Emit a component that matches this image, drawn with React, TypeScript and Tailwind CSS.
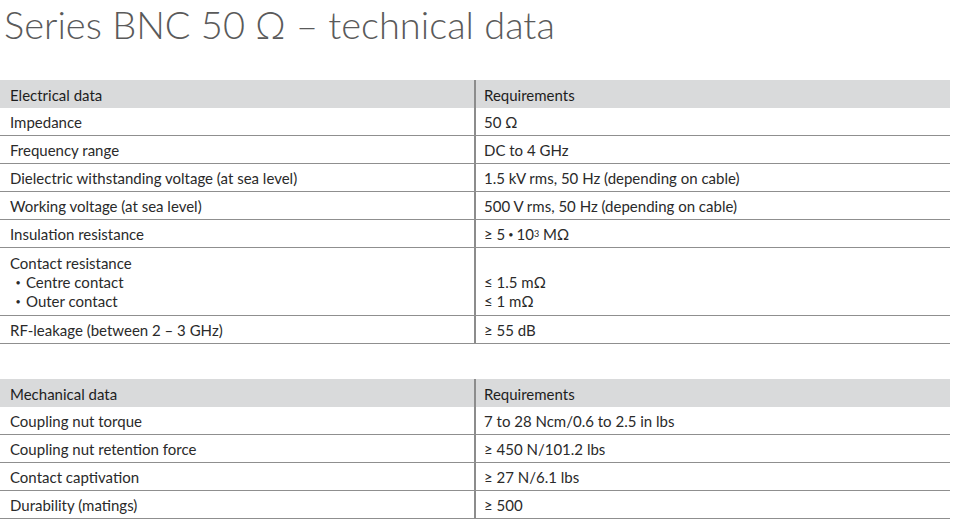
const ELECTRICAL: { label: React.ReactNode; value: React.ReactNode; tall?: boolean }[] = [
  { label: "Impedance", value: "50 Ω" },
  { label: "Frequency range", value: "DC to 4 GHz" },
  { label: "Dielectric withstanding voltage (at sea level)", value: "1.5 kV rms, 50 Hz (depending on cable)" },
  { label: "Working voltage (at sea level)", value: "500 V rms, 50 Hz (depending on cable)" },
  {
    label: "Insulation resistance",
    value: (
      <>
        ≥ 5 <span className="text-[9px] mx-[3px]">•</span> 10<sup className="text-[9px] relative -top-[1px]">3</sup>&nbsp;MΩ
      </>
    ),
  },
  {
    label: (
      <div className="flex flex-col">
        <span>Contact resistance</span>
        <span className="flex items-center"><span className="w-[16px] text-[9px] text-center">•</span>Centre contact</span>
        <span className="flex items-center"><span className="w-[16px] text-[9px] text-center">•</span>Outer contact</span>
      </div>
    ),
    value: (
      <div className="flex flex-col">
        <span>&nbsp;</span>
        <span>≤ 1.5 mΩ</span>
        <span>≤ 1 mΩ</span>
      </div>
    ),
    tall: true,
  },
  { label: "RF-leakage (between 2 – 3 GHz)", value: "≥ 55 dB" },
];

const MECHANICAL = [
  { label: "Coupling nut torque", value: "7 to 28 Ncm/0.6 to 2.5 in lbs" },
  { label: "Coupling nut retention force", value: "≥ 450 N/101.2 lbs" },
  { label: "Contact captivation", value: "≥ 27 N/6.1 lbs" },
  { label: "Durability (matings)", value: "≥ 500" },
];

function DataTable({ title, rows }: { title: string; rows: { label: React.ReactNode; value: React.ReactNode; tall?: boolean }[] }) {
  return (
    <div className="w-[950px]">
      <div className="flex h-[28px] bg-[#d9dadb] text-[#1e1e1e]">
        <div className="w-[476px] border-r-2 border-[#8c8c8c] pl-[10px] pt-[2px] flex items-center">{title}</div>
        <div className="flex-1 pl-[8px] pt-[2px] flex items-center">Requirements</div>
      </div>
      {rows.map((r, i) => (
        <div key={i} className={`flex border-b border-[#8f8f8f] ${r.tall ? "h-[68px]" : "h-[28px]"}`}>
          <div className={`w-[476px] border-r-2 border-[#8c8c8c] pl-[10px] flex ${r.tall ? "items-start pt-[6px] leading-[19px]" : "items-center pt-[2px]"}`}>
            {r.label}
          </div>
          <div className={`flex-1 pl-[8px] flex ${r.tall ? "items-start pt-[6px] leading-[19px]" : "items-center pt-[2px]"}`}>
            {r.value}
          </div>
        </div>
      ))}
    </div>
  );
}

export default function App() {
  return (
    <div className="w-[954px] h-[525px] bg-white overflow-hidden text-[15px] text-[#2a2a2a]" style={{ fontFamily: "Lato, 'Noto Sans', sans-serif" }}>
      <h1 className="pl-[4px] pt-[2px] h-[80px] text-[38px] leading-[44px] font-light text-[#5a5a5a]">
        Series BNC 50 Ω – technical data
      </h1>
      <DataTable title="Electrical data" rows={ELECTRICAL} />
      <div className="h-[35px]" />
      <DataTable title="Mechanical data" rows={MECHANICAL} />
    </div>
  );
}
